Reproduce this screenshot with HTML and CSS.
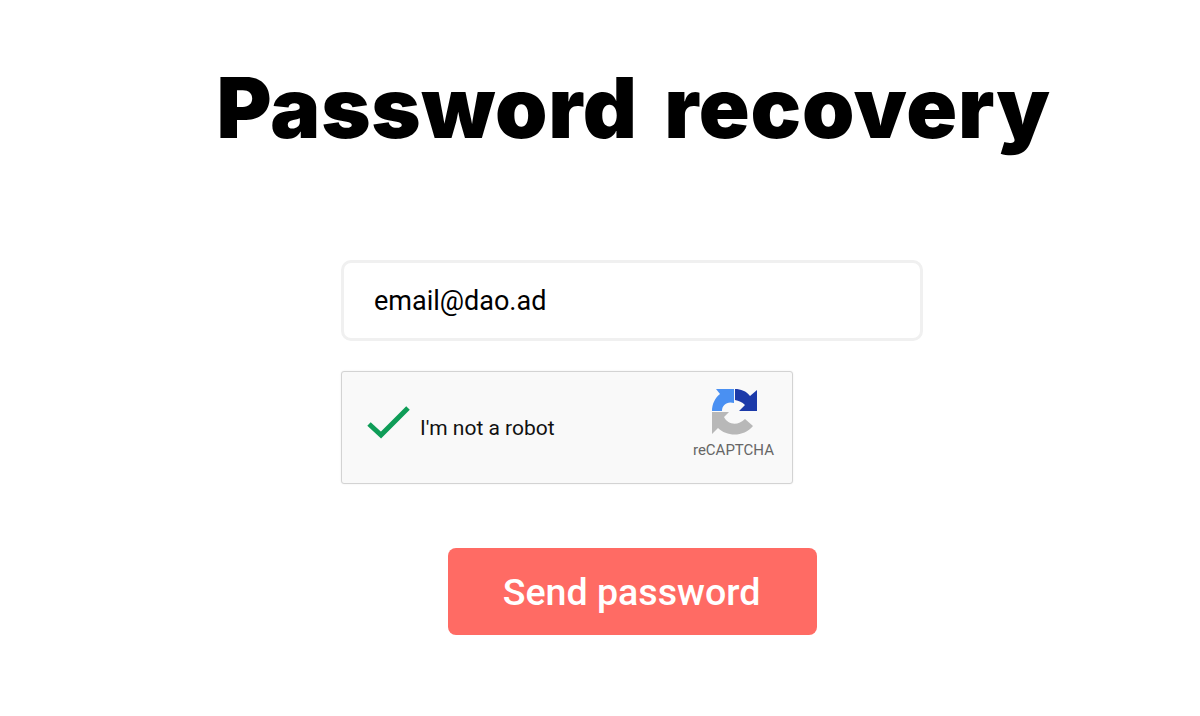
FILE: index.html
```html
<!DOCTYPE html>
<html lang="en">

<head>
  <meta charset="UTF-8">
  <title>Password recovery</title>
  <link rel="stylesheet" href="styles.css">
</head>

<body>
  <main class="recovery">
    <h1>Password recovery</h1>
    <form class="form">
      <input class="email" type="text" value="email@dao.ad">
      <div class="captcha">
        <svg class="check" viewBox="0 0 44 34" width="44" height="34">
          <path d="M3 19 L15 30 L42 3" fill="none" stroke="#0f9d58" stroke-width="5" />
        </svg>
        <span class="captcha-label">I'm not a robot</span>
        <div class="captcha-brand">
          <svg class="logo" viewBox="0 0 46 46" width="46" height="46">
            <path d="M0 22 C0 15 3 9 8 5 L4 0 H22 V14 C15 12 10 16 10 22 Z" fill="#4a90f2" />
            <path d="M23 0 C29 0 34 2 38 7 L45 1 V22 H27 L33 16 C30 13 27 12 23 11 Z" fill="#1c3aa9" />
            <path d="M0 23 H17 L12 28 C16 36 26 37 33 30 L41 37 C32 48 15 48 6 39 L0 45 Z" fill="#b8b8b8" />
          </svg>
          <span class="brand-name">reCAPTCHA</span>
        </div>
      </div>
      <button class="send" type="button">Send password</button>
    </form>
  </main>
</body>

</html>
```

FILE: styles.css
```css
* {
  box-sizing: border-box;
}

body {
  margin: 0;
  background: #fff;
  font-family: Roboto, sans-serif;
}

.recovery {
  display: flex;
  flex-direction: column;
  align-items: center;
  padding-left: 64px;
  padding-top: 58px;
}

h1 {
  margin: 0;
  padding-left: 3px;
  font-family: Inter, sans-serif;
  font-size: 84px;
  font-weight: 900;
  font-optical-sizing: none;
  line-height: 100px;
  letter-spacing: 0.75px;
  word-spacing: 9px;
  color: #000;
}

.form {
  display: flex;
  flex-direction: column;
  width: 582px;
  margin-top: 102px;
}

.email {
  width: 582px;
  height: 81px;
  padding: 0 30px;
  border: 3px solid #f0f0f0;
  border-radius: 10px;
  font-family: Roboto, sans-serif;
  font-size: 27px;
  color: #000;
  outline: none;
}

.captcha {
  display: flex;
  align-items: center;
  width: 452px;
  height: 113px;
  margin-top: 30px;
  padding: 0 18px 0 24px;
  background: #f9f9f9;
  border: 1px solid #d3d3d3;
  border-radius: 3px;
  box-shadow: 0 0 2px rgba(0, 0, 0, 0.08);
}

.check {
  flex: none;
  margin-top: -12px;
}

.captcha-label {
  margin-left: 10px;
  font-size: 21px;
  color: #111;
}

.captcha-brand {
  display: flex;
  flex-direction: column;
  align-items: center;
  margin-left: auto;
  padding-bottom: 8px;
}

.logo {
  margin-left: 3px;
}

.brand-name {
  margin-top: 6px;
  font-size: 15px;
  color: #666;
}

.send {
  align-self: flex-start;
  width: 369px;
  height: 87px;
  margin-top: 64px;
  margin-left: 107px;
  padding: 0 6px 0 4px;
  background: #ff6b64;
  border: none;
  border-radius: 8px;
  font-family: Roboto, sans-serif;
  font-size: 37.6px;
  font-weight: 500;
  color: #fff;
}
```
